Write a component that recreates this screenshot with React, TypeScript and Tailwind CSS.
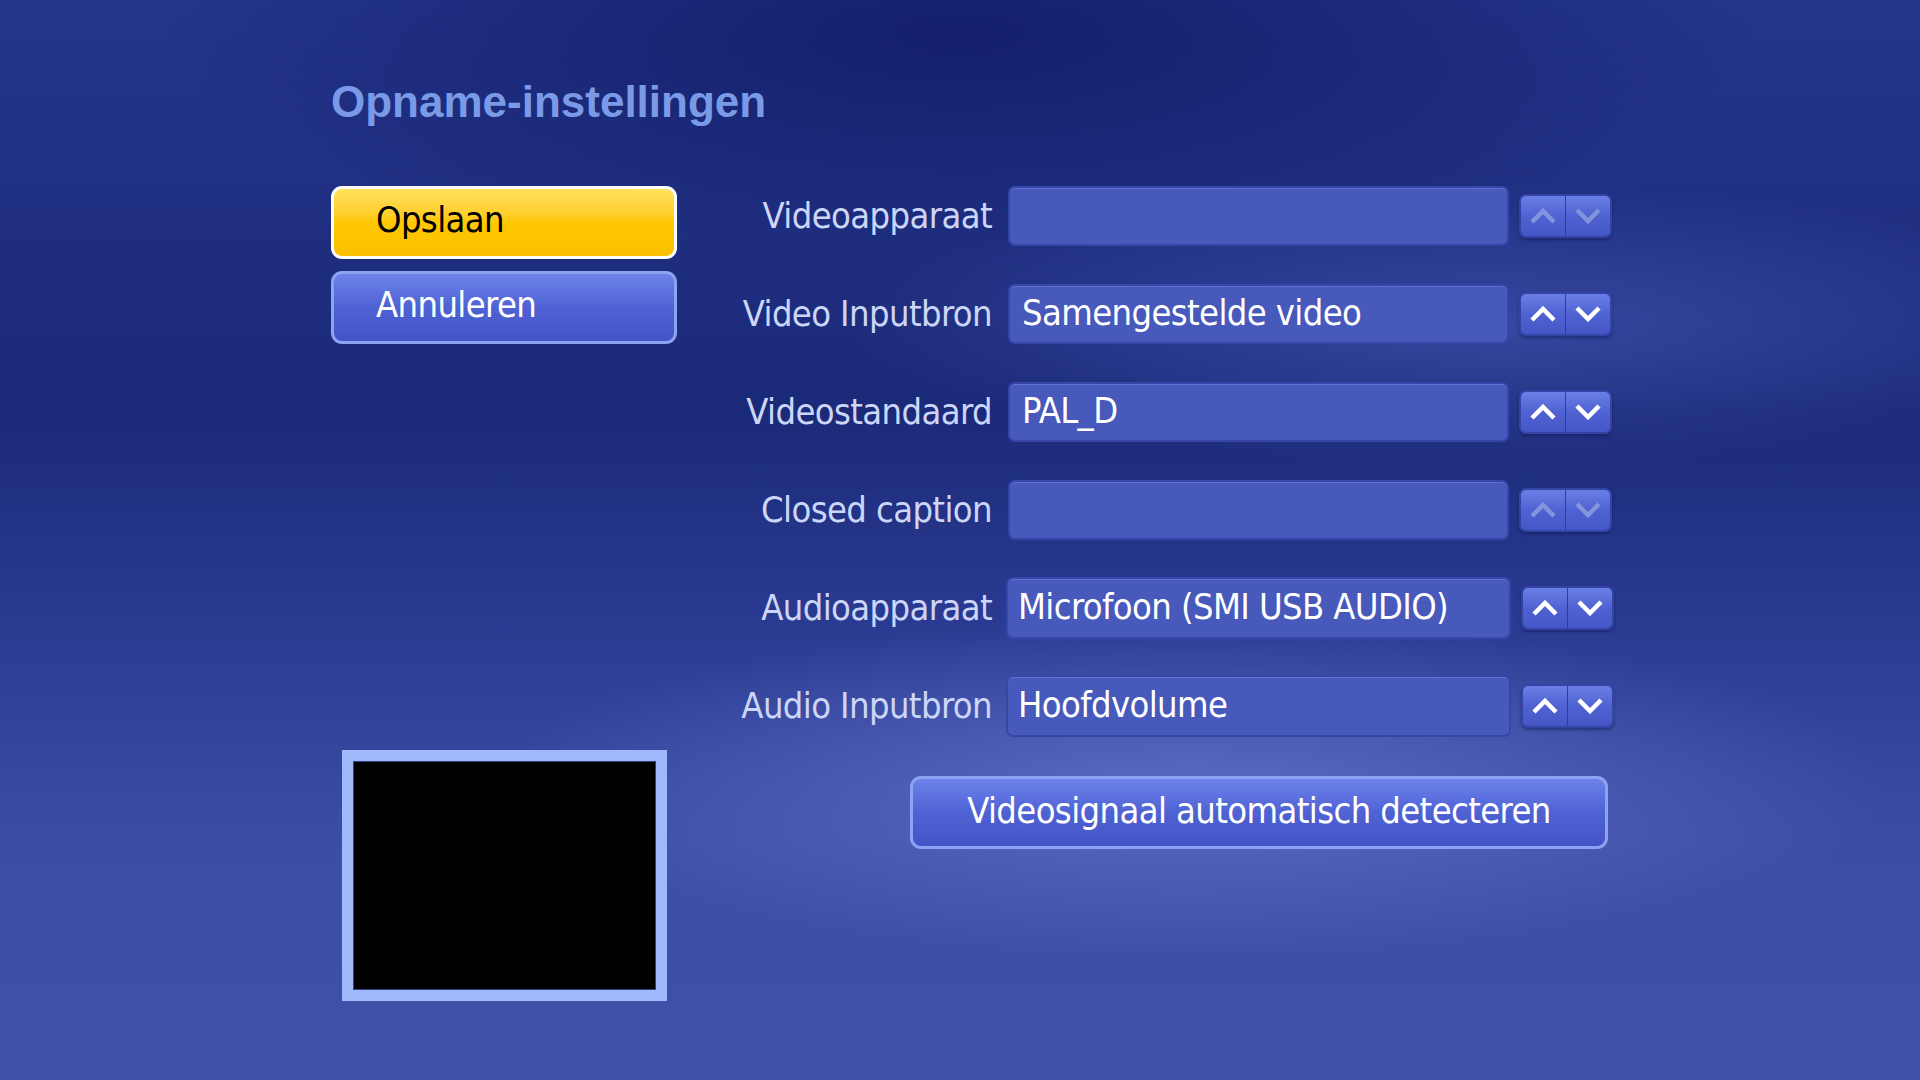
const labelFont = "font-['DejaVu_Sans_Condensed','DejaVu_Sans',sans-serif] [font-stretch:condensed] tracking-[-0.6px]";

interface SettingRow {
  label: string;
  value: string;
  enabled: boolean;
  wide?: boolean;
}

const rows: SettingRow[] = [
  { label: "Videoapparaat", value: "", enabled: false },
  { label: "Video Inputbron", value: "Samengestelde video", enabled: true },
  { label: "Videostandaard", value: "PAL_D", enabled: true },
  { label: "Closed caption", value: "", enabled: false },
  { label: "Audioapparaat", value: "Microfoon (SMI USB AUDIO)", enabled: true, wide: true },
  { label: "Audio Inputbron", value: "Hoofdvolume", enabled: true, wide: true },
];

function Chevron({ up, enabled }: { up: boolean; enabled: boolean }) {
  return (
    <svg width="26" height="16" viewBox="0 0 26 16">
      <polyline
        points={up ? "2,14 13,3 24,14" : "2,2 13,13 24,2"}
        fill="none"
        stroke={enabled ? "#ffffff" : "#8393dc"}
        strokeWidth="4.5"
        strokeLinejoin="miter"
      />
    </svg>
  );
}

function Spinner({ enabled }: { enabled: boolean }) {
  return (
    <div className="ml-[10px] w-[93px] h-[44px] flex rounded-[7px] border-2 border-[#3343a6] bg-gradient-to-b from-[#6a7fe6] via-[#5062d2] to-[#4556c6] shadow-[0_2px_3px_rgba(10,20,80,0.45)] overflow-hidden">
      <div className="flex-1 flex items-center justify-center border-r border-[#2f3d9a]">
        <Chevron up enabled={enabled} />
      </div>
      <div className="flex-1 flex items-center justify-center">
        <Chevron up={false} enabled={enabled} />
      </div>
    </div>
  );
}

function Row({ label, value, enabled, wide }: SettingRow) {
  return (
    <div className="flex items-center h-[60px]">
      <div className="w-[292px] text-right text-[36px] leading-none text-[#ccd6f8]">{label}</div>
      <div
        className={
          wide
            ? "ml-[14px] w-[505px] h-[62px] flex items-center pl-[10px] pb-[2px] rounded-[7px] border-2 border-[#3545aa] bg-[#4759bb] shadow-[inset_0_1px_0_rgba(140,160,240,0.35)] text-[36px] leading-none text-white"
            : "ml-[16px] w-[501px] h-[60px] flex items-center pl-[12px] pb-[2px] rounded-[7px] border-2 border-[#3545aa] bg-[#4759bb] shadow-[inset_0_1px_0_rgba(140,160,240,0.35)] text-[36px] leading-none text-white"
        }
      >
        {value}
      </div>
      <Spinner enabled={enabled} />
    </div>
  );
}

export default function App() {
  return (
    <div
      className={`w-[1920px] h-[1080px] overflow-hidden ${labelFont} bg-[radial-gradient(ellipse_700px_170px_at_62%_73%,rgba(120,135,225,0.55),transparent),radial-gradient(ellipse_650px_140px_at_78%_30%,rgba(85,105,205,0.45),transparent),radial-gradient(ellipse_800px_220px_at_50%_3%,rgba(12,22,92,0.7),transparent),linear-gradient(180deg,#24358b_0%,#1d2c7c_28%,#1b2a78_38%,#2a3b92_58%,#3c4da5_78%,#4151aa_100%)]`}
    >
      <div className="pl-[331px] pt-[80px]">
        <h1 className="font-['Liberation_Sans',Arial,sans-serif] font-bold text-[44px] tracking-normal leading-none text-[#7a9ae8]">
          Opname-instellingen
        </h1>

        <div className="flex mt-[62px]">
          {/* left column: actions + preview */}
          <div className="w-[346px] flex flex-col">
            <button className="h-[73px] rounded-[11px] border-[3px] border-white bg-gradient-to-b from-[#ffe15a] via-[#ffc800] to-[#f9c000] text-left pl-[42px] pb-[5px] text-[36px] leading-none text-black">
              Opslaan
            </button>
            <button className="mt-[12px] h-[73px] rounded-[11px] border-[3px] border-[#8da3f2] bg-gradient-to-b from-[#6d83ea] via-[#4f62d4] to-[#4354c6] text-left pl-[42px] pb-[5px] text-[36px] leading-none text-white">
              Annuleren
            </button>
            <div className="mt-[406px] ml-[11px] w-[325px] h-[251px] bg-[#a0b8fc] p-[11px]">
              <div className="w-full h-full bg-black border border-[#2d3f86]" />
            </div>
          </div>

          {/* right column: settings */}
          <div className="ml-[23px] flex flex-col gap-[38px]">
            {rows.map((r) => (
              <Row key={r.label} {...r} />
            ))}
            <button className="ml-[210px] mt-[2px] w-[698px] h-[73px] rounded-[11px] border-[3px] border-[#8da3f2] bg-gradient-to-b from-[#6d83ea] via-[#4f62d4] to-[#4354c6] pb-[4px] text-[36px] leading-none text-white">
              Videosignaal automatisch detecteren
            </button>
          </div>
        </div>
      </div>
    </div>
  );
}
